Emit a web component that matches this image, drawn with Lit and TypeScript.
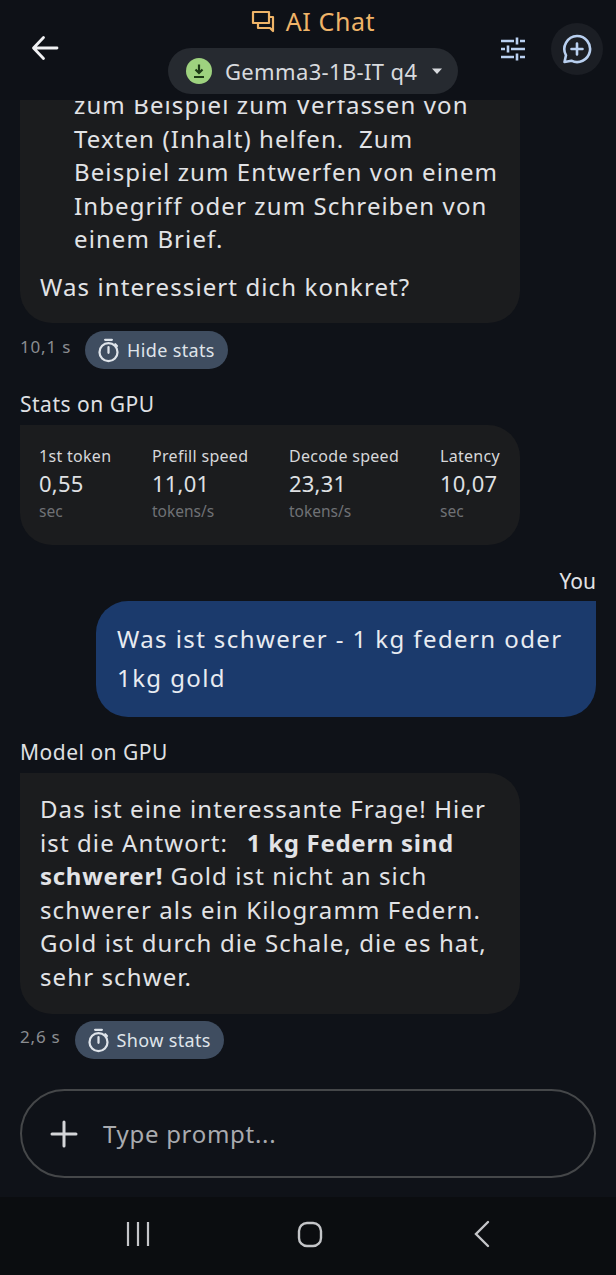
import { LitElement, html, css, svg } from "lit";
import { customElement } from "lit/decorators.js";

const stats = [
  { l: "1st token", v: "0,55", u: "sec", w: 113 },
  { l: "Prefill speed", v: "11,01", u: "tokens/s", w: 137 },
  { l: "Decode speed", v: "23,31", u: "tokens/s", w: 151 },
  { l: "Latency", v: "10,07", u: "sec", w: 60 },
];

const timer = svg`<circle cx="12" cy="13.5" r="8" fill="none" stroke="currentColor" stroke-width="2"/><path d="M9 2.5h6M12 9v5M18 6.5l1.5 1.5" fill="none" stroke="currentColor" stroke-width="2" stroke-linecap="round"/>`;

@customElement("app-root")
export class AppRoot extends LitElement {
  static styles = css`
    :host { display: block; width: 616px; height: 1275px; font-family: "Noto Sans", "Lato", sans-serif; color: #e2e3e6; }
    * { box-sizing: border-box; }
    .app { height: 1275px; display: flex; flex-direction: column; background: #0f1218; overflow: hidden; }
    header { height: 100px; flex: none; display: grid; grid-template-columns: 1fr auto 1fr; padding: 5px 13px 0 23px; background: #0e1117; position: relative; z-index: 1; }
    .left { display: flex; align-items: center; height: 86px; padding-left: 7px; }
    .centre { display: flex; flex-direction: column; align-items: center; }
    .title { display: flex; align-items: center; gap: 11px; height: 32px; color: #efb468; font-size: 25px; letter-spacing: .6px; }
    .chip { display: flex; align-items: center; margin-top: 11px; height: 46px; width: 290px; padding: 0 14px 0 18px; border-radius: 23px; background: #262a30; color: #d8dade; font-size: 22px; letter-spacing: .35px; }
    .dot { width: 26px; height: 26px; border-radius: 50%; background: #9ed27f; display: flex; align-items: center; justify-content: center; margin-right: 13px; flex: none; }
    .chip span { flex: 1; white-space: nowrap; }
    .right { display: flex; justify-content: flex-end; align-items: center; height: 88px; gap: 25px; color: #b9d0f0; }
    .round { width: 52px; height: 52px; border-radius: 50%; background: #1b1e24; display: flex; align-items: center; justify-content: center; }
    main { flex: 1; min-height: 0; display: flex; flex-direction: column; justify-content: flex-end; padding: 0 20px; overflow: hidden; }
    .bubble { width: 500px; flex: none; background: #1b1c1e; border-radius: 0 32px 32px 32px; padding: 16px 20px 20px; font-size: 24px; line-height: 33.5px; letter-spacing: 1.1px; color: #e2e3e6; }
    .bubble b { font-weight: 700; letter-spacing: .7px; }
    .bubble b.lead { margin-left: 4px; }
    .bubble ul { margin: 0 0 14px; padding: 0 0 0 34px; list-style: none; }
    .bubble p { margin: 0; }
    .cut { border-radius: 0 0 32px 32px; padding-top: 0; }
    .meta { display: flex; align-items: center; gap: 14px; height: 38px; margin-top: 8px; flex: none; }
    .time { color: #8a8c90; font-size: 17px; letter-spacing: .8px; position: relative; top: -4px; }
    .pill { display: flex; align-items: center; gap: 5px; height: 38px; padding: 0 13px 0 10px; border-radius: 19px; background: #3f4d60; color: #dfe4ea; font-size: 18px; letter-spacing: .35px; }
    .label { font-size: 21px; line-height: 28px; letter-spacing: .5px; color: #dfe0e3; flex: none; }
    .stats { width: 500px; height: 120px; flex: none; background: #1b1c1e; border-radius: 0 32px 32px 32px; padding: 19px 19px; display: flex; margin-top: 7px; }
    .stat { display: flex; flex-direction: column; white-space: nowrap; }
    .stat .l { font-size: 16px; line-height: 24px; letter-spacing: .3px; color: #d6d7da; }
    .stat .v { font-size: 22px; line-height: 31px; letter-spacing: .2px; color: #dfe0e3; }
    .stat .u { font-size: 15.500px; line-height: 24px; color: #6f7175; }
    .you { align-self: flex-end; margin-top: 22px; flex: none; font-size: 21px; line-height: 28px; }
    .user { align-self: flex-end; width: 500px; flex: none; margin-top: 6px; background: #1b3a6c; color: #e8ebf1; border-radius: 32px 0 32px 32px; padding: 18px 20px 20px 21px; font-size: 24px; line-height: 39px; letter-spacing: 1.4px; }
    .model { margin-top: 21px; }
    .model + .bubble { margin-top: 7px; padding: 19px 20px 21px; }
    .meta.last { margin-top: 7px; }
    .input { flex: none; margin: 30px 20px 19px; height: 89px; border: 2px solid #454749; border-radius: 45px; display: flex; align-items: center; padding-left: 28px; gap: 25px; color: #a9abaf; font-size: 24px; letter-spacing: .7px; }
    nav { flex: none; height: 78px; background: #0b0d10; display: grid; grid-template-columns: repeat(3, 172px); align-items: center; justify-items: center; padding: 0 0 5px 52px; color: #c4c5c8; }
  `;

  render() {
    return html`<div class="app">
      <header>
        <div class="left">
          <svg width="30" height="30" viewBox="0 0 30 30" fill="none" stroke="#f0f1f3" stroke-width="2.8" stroke-linecap="round" stroke-linejoin="round"><path d="M27 15H4M13.5 4.5 3.5 15l10 10.5"/></svg>
        </div>
        <div class="centre">
          <div class="title">
            <svg width="24" height="24" viewBox="0 0 24 24" fill="none" stroke="#efb468" stroke-width="2.2" stroke-linejoin="round"><path d="M2 3h16v11H2zM7 14v5h12l3 3V8h-4"/></svg>
            <span>AI Chat</span>
          </div>
          <div class="chip">
            <div class="dot"><svg width="18" height="18" viewBox="0 0 18 18" fill="none" stroke="#1d3a16" stroke-width="2.2"><path d="M9 2.5v7.5M5.5 7.5 9 11l3.5-3.5M4 15h10"/></svg></div>
            <span>Gemma3-1B-IT q4</span>
            <svg width="14" height="10" viewBox="0 0 14 10"><path d="M2 2.5h10L7 8z" fill="#d8dade"/></svg>
          </div>
        </div>
        <div class="right">
          <svg width="26" height="26" viewBox="0 0 26 26" fill="none" stroke="currentColor" stroke-width="2.6"><path d="M1 5h13M20 5h5M17 1.500v7M1 13h4M11 13h14M8 9.500v7M1 21h13M20 21h5M17 17.500v7"/></svg>
          <div class="round">
            <svg width="32" height="32" viewBox="0 0 32 32" fill="none" stroke="currentColor" stroke-width="2.6" stroke-linejoin="round" stroke-linecap="round"><path d="M16 3a13 13 0 1 1-5.600 24.700L3.500 29l1.500-6.700A13 13 0 0 1 16 3z"/><path d="M16 10.500v11M10.500 16h11"/></svg>
          </div>
        </div>
      </header>
      <main>
        <div class="bubble cut">
          <ul>
            <li>zum Beispiel zum Verfassen von Texten (Inhalt) helfen.&nbsp; Zum Beispiel zum Entwerfen von einem Inbegriff oder zum Schreiben von einem Brief.</li>
          </ul>
          <p>Was interessiert dich konkret?</p>
        </div>
        <div class="meta">
          <span class="time">10,1 s</span>
          <div class="pill"><svg width="27" height="27" viewBox="0 0 24 24">${timer}</svg>Hide stats</div>
        </div>
        <div class="label" style="margin-top:21px">Stats on GPU</div>
        <div class="stats">
          ${stats.map((s) => html`<div class="stat" style="width:${s.w}px"><span class="l">${s.l}</span><span class="v">${s.v}</span><span class="u">${s.u}</span></div>`)}
        </div>
        <div class="you">You</div>
        <div class="user">Was ist schwerer - 1 kg federn oder 1kg gold</div>
        <div class="label model">Model on GPU</div>
        <div class="bubble">Das ist eine interessante Frage! Hier ist die Antwort:&nbsp; <b class="lead">1 kg Federn sind</b> <b>schwerer!</b> Gold ist nicht an sich schwerer als ein Kilogramm Federn. Gold ist durch die Schale, die es hat, sehr schwer.</div>
        <div class="meta last">
          <span class="time">2,6 s</span>
          <div class="pill"><svg width="27" height="27" viewBox="0 0 24 24">${timer}</svg>Show stats</div>
        </div>
      </main>
      <div class="input">
        <svg width="28" height="28" viewBox="0 0 28 28" fill="none" stroke="#d4d5d8" stroke-width="3" stroke-linecap="round"><path d="M14 2v24M2 14h24"/></svg>
        <span>Type prompt...</span>
      </div>
      <nav>
        <svg width="26" height="28" viewBox="0 0 26 28" fill="none" stroke="currentColor" stroke-width="2.200"><path d="M3 2v24M13 2v24M23 2v24"/></svg>
        <svg width="26" height="28" viewBox="0 0 26 28" fill="none" stroke="currentColor" stroke-width="2.400"><rect x="2" y="3" width="22" height="23" rx="8"/></svg>
        <svg width="18" height="30" viewBox="0 0 18 30" fill="none" stroke="currentColor" stroke-width="2.400" stroke-linecap="round"><path d="M15 3 3 15l12 12"/></svg>
      </nav>
    </div>`;
  }
}
